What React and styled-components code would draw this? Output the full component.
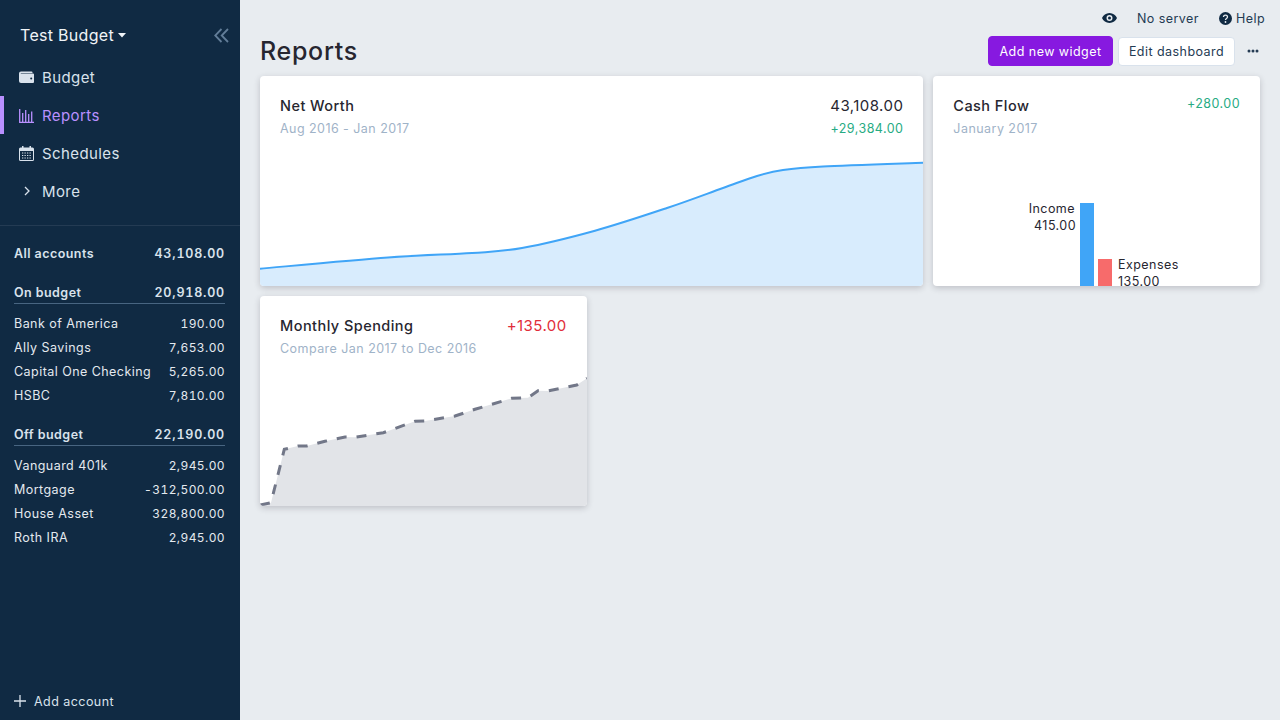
import React from 'react';
import styled, { createGlobalStyle } from 'styled-components';

const Global = createGlobalStyle`
  html, body { margin: 0; padding: 0; height: 100%; }
  body { font-family: Inter, "Noto Sans", sans-serif; font-size: 12.5px; letter-spacing: 0.45px; color: #272630; background: #e8ecf0; overflow: hidden; }
  #root { height: 720px; }
  * { box-sizing: border-box; }
`;

const Shell = styled.div`display: flex; width: 1280px; height: 720px;`;
const Sidebar = styled.aside`width: 240px; flex: none; background: #102a43; color: #d9e2ec; display: flex; flex-direction: column;`;
const BudgetHeader = styled.div`display: flex; align-items: center; height: 58px; padding: 12px 11px 0 20px;`;
const BudgetName = styled.div`font-size: 16px; color: #f0f4f8; letter-spacing: 0.3px; flex: 1; display: flex; align-items: center; gap: 4px;`;
const Nav = styled.nav`display: flex; flex-direction: column; padding-bottom: 15px; border-bottom: 1px solid #243b53;`;
const NavItem = styled.div`
  display: flex; align-items: center; gap: 8px; height: 38px; font-size: 15px; letter-spacing: 0.4px;
  padding-left: ${p => (p.$active ? 15 : 19)}px;
  color: ${p => (p.$active ? '#b990ff' : '#d9e2ec')};
  border-left: ${p => (p.$active ? '4px solid #b990ff' : 'none')};
`;
const NavIcon = styled.span`width: 15px; height: 15px; display: flex; align-items: center; justify-content: center;`;
const Accounts = styled.div`flex: 1; padding: 15px 15px 0 14px; display: flex; flex-direction: column;`;
const Row = styled.div`
  display: flex; justify-content: space-between; align-items: center; height: 24px;
  color: ${p => (p.$bold ? '#d9e2ec' : '#e4e9ef')};
  font-weight: ${p => (p.$bold ? 600 : 400)};
`;
const Amount = styled.span`
  font-variant-numeric: tabular-nums;
  font-size: ${p => (p.$bold ? 12.5 : 12)}px;
  letter-spacing: ${p => (p.$bold ? 0.8 : 0.4)}px;
`;
const GroupHead = styled(Row)`height: 23px; border-bottom: 1px solid #486581; margin-bottom: 7px; margin-top: ${p => p.$top}px;`;
const AddAccount = styled.div`height: 38px; display: flex; align-items: center; gap: 8px; padding-left: 14px; color: #d9e2ec;`;

const Main = styled.main`flex: 1; min-width: 0; display: flex; flex-direction: column; padding: 0 20px;`;
const TopBar = styled.div`height: 36px; display: flex; justify-content: flex-end; align-items: center; gap: 20px; color: #243b53; margin-right: -5px;`;
const TopItem = styled.div`display: flex; align-items: center; gap: 4px;`;
const TitleRow = styled.div`display: flex; align-items: center; justify-content: space-between; height: 30px; margin-bottom: 10px;`;
const Title = styled.h1`margin: 0; font-size: 25px; font-weight: 450; color: #272630; letter-spacing: 0.7px;`;
const Actions = styled.div`display: flex; align-items: center; gap: 5px;`;
const PrimaryButton = styled.button`height: 30px; width: 125px; padding: 0; font: inherit; letter-spacing: inherit; color: #fff; background: #8719e0; border: 1px solid #8719e0; border-radius: 4px;`;
const Button = styled.button`height: 29px; width: 117px; padding: 0; font: inherit; letter-spacing: inherit; color: #243b53; background: #fff; border: 1px solid #d9e2ec; border-radius: 4px;`;
const Dots = styled.div`width: 20px; height: 29px; padding-right: 1px; display: flex; align-items: center; justify-content: flex-end;`;

const Grid = styled.div`display: grid; grid-template-columns: repeat(3, 1fr); grid-auto-rows: 210px; gap: 10px;`;
const Card = styled.section`
  position: relative; grid-column: span ${p => p.$span || 1}; background: #fff; border-radius: 4px; overflow: hidden;
  box-shadow: 0 2px 6px rgba(39, 38, 48, 0.22); display: flex; flex-direction: column;
`;
const CardHeader = styled.div`position: relative; display: flex; justify-content: space-between; padding: 20px 20px 0;`;
const CardTitle = styled.div`font-size: 14.5px; font-weight: 450; line-height: 20px; letter-spacing: 0.45px; color: #272630;`;
const CardSub = styled.div`line-height: 16px; margin-top: 5px; color: #9fb3c8;`;
const Figures = styled.div`text-align: right;`;
const Big = styled.div`font-size: 15px; font-weight: 400; line-height: 20px; letter-spacing: 0.45px; color: ${p => p.$color || '#272630'};`;
const Small = styled.div`line-height: 16px; color: #27ab83; margin-top: ${p => p.$mt ?? 5}px;`;
const Chart = styled.svg`display: block; position: absolute; left: 0; top: 0;`;

const smooth = pts => {
  let d = `M${pts[0][0]} ${pts[0][1]}`;
  for (let i = 0; i < pts.length - 1; i++) {
    const p0 = pts[i - 1] || pts[i];
    const p1 = pts[i];
    const p2 = pts[i + 1];
    const p3 = pts[i + 2] || p2;
    d += ` C${p1[0] + (p2[0] - p0[0]) / 6} ${p1[1] + (p2[1] - p0[1]) / 6} ${p2[0] - (p3[0] - p1[0]) / 6} ${p2[1] - (p3[1] - p1[1]) / 6} ${p2[0]} ${p2[1]}`;
  }
  return d;
};
const netPts = smooth([[0,192.7],[128,181.5],[212,177],[262,172],[335,154.7],[407,132],[463,112],[497,100],[523,94],[563,90.500],[663,86.700]]);
const spend = [[0,209],[11,206.7],[24.3,153.3],[38,150],[46.7,150],[65,145.3],[85,141],[95,141.3],[123.3,136.7],[155,125.3],[165,125],[195,120],[215,113.3],[251.7,102.3],[268,101.7],[278,94.7],[288,95],[316.7,89],[327,82.3]];
const spendLine = spend.map(([x, y], i) => `${i ? 'L' : 'M'}${x} ${y}`).join(' ');

const accounts1 = [['Bank of America','190.00'],['Ally Savings','7,653.00'],['Capital One Checking','5,265.00'],['HSBC','7,810.00']];
const accounts2 = [['Vanguard 401k','2,945.00'],['Mortgage','-312,500.00'],['House Asset','328,800.00'],['Roth IRA','2,945.00']];

const Wallet = () => (
  <svg width="15" height="15" viewBox="0 0 15 15"><path d="M2 1.500h10.500a1 1 0 0 1 1 1v.5H2.200c-.6 0-.6.6 0 .6H14a1 1 0 0 1 1 1v7.400a1 1 0 0 1-1 1H2a2 2 0 0 1-2-2V3.500a2 2 0 0 1 2-2z" fill="#d9e2ec"/><circle cx="12.200" cy="8.600" r="1" fill="#102a43"/></svg>
);
const Bars = () => (
  <svg width="15" height="15" viewBox="0 0 15 15" fill="none" stroke="#b990ff" strokeWidth="1.300"><path d="M0.700 1v13.300H15M3.700 5v9M6.700 2v12M9.700 6v8M12.700 3.500v10.500"/></svg>
);
const Calendar = () => (
  <svg width="15" height="15" viewBox="0 0 15 15"><path fillRule="evenodd" fill="#d9e2ec" d="M3 0h1.500v1.500h6V0H12v1.500h1.500A1.500 1.500 0 0 1 15 3v10.500a1.500 1.500 0 0 1-1.500 1.500h-12A1.500 1.500 0 0 1 0 13.500V3a1.500 1.500 0 0 1 1.500-1.500H3zM1 5v8.500a.5.5 0 0 0 .5.5h12a.5.5 0 0 0 .5-.5V5z"/><path stroke="#d9e2ec" strokeWidth="1.200" strokeDasharray="1.300 1.200" d="M3 7h9.500M3 9.500h9.500M3 12h9.500"/></svg>
);
const Chevron = () => (
  <svg width="8" height="10" viewBox="0 0 8 10" fill="none" stroke="#d9e2ec" strokeWidth="1.300"><path d="M2 1l4 4-4 4"/></svg>
);
const Caret = () => (
  <svg width="8" height="5" viewBox="0 0 8 5"><path d="M0 0h8L4 4.600z" fill="#f0f4f8"/></svg>
);
const Collapse = () => (
  <svg width="15" height="15" viewBox="0 0 15 15" fill="none" stroke="#627d98" strokeWidth="1.800"><path d="M7.500 1L1.200 7.500 7.500 14M14 1L7.700 7.500 14 14"/></svg>
);
const Eye = () => (
  <svg width="15" height="10" viewBox="0 0 15 10"><path fillRule="evenodd" fill="#102a43" d="M7.500 0C11 0 13.800 2.200 15 5c-1.200 2.800-4 5-7.500 5S1.200 7.800 0 5C1.200 2.200 4 0 7.500 0zm0 2a3 3 0 1 0 0 6 3 3 0 0 0 0-6z"/><circle cx="7.500" cy="5" r="1.500" fill="#102a43"/></svg>
);
const Help = () => (
  <svg width="13" height="13" viewBox="0 0 13 13"><circle cx="6.500" cy="6.500" r="6.500" fill="#102a43"/><path d="M4.500 5c0-2.600 4-2.600 4 0 0 1.500-2 1.500-2 3" fill="none" stroke="#e8ecf0" strokeWidth="1.300"/><circle cx="6.500" cy="10" r=".9" fill="#e8ecf0"/></svg>
);
const More = () => (
  <svg width="12" height="4" viewBox="0 0 12 4" fill="#243b53"><circle cx="2" cy="2" r="1.500"/><circle cx="6" cy="2" r="1.500"/><circle cx="10" cy="2" r="1.500"/></svg>
);
const Plus = () => (
  <svg width="12" height="12" viewBox="0 0 12 12" stroke="#d9e2ec" strokeWidth="1.300"><path d="M6 0v12M0 6h12"/></svg>
);

export default function App() {
  return (
    <Shell>
      <Global />
      <Sidebar>
        <BudgetHeader>
          <BudgetName>Test Budget <Caret /></BudgetName>
          <Collapse />
        </BudgetHeader>
        <Nav>
          <NavItem><NavIcon><Wallet /></NavIcon>Budget</NavItem>
          <NavItem $active><NavIcon><Bars /></NavIcon>Reports</NavItem>
          <NavItem><NavIcon><Calendar /></NavIcon>Schedules</NavItem>
          <NavItem><NavIcon><Chevron /></NavIcon>More</NavItem>
        </Nav>
        <Accounts>
          <Row $bold><span>All accounts</span><Amount $bold>43,108.00</Amount></Row>
          <GroupHead $bold $top={16}><span>On budget</span><Amount $bold>20,918.00</Amount></GroupHead>
          {accounts1.map(([n, v]) => <Row key={n}><span>{n}</span><Amount>{v}</Amount></Row>)}
          <GroupHead $bold $top={16}><span>Off budget</span><Amount $bold>22,190.00</Amount></GroupHead>
          {accounts2.map(([n, v]) => <Row key={n}><span>{n}</span><Amount>{v}</Amount></Row>)}
        </Accounts>
        <AddAccount><Plus />Add account</AddAccount>
      </Sidebar>
      <Main>
        <TopBar>
          <Eye />
          <TopItem>No server</TopItem>
          <TopItem><Help />Help</TopItem>
        </TopBar>
        <TitleRow>
          <Title>Reports</Title>
          <Actions>
            <PrimaryButton>Add new widget</PrimaryButton>
            <Button>Edit dashboard</Button>
            <Dots><More /></Dots>
          </Actions>
        </TitleRow>
        <Grid>
          <Card $span={2}>
            <Chart width="664" height="210" viewBox="0 0 664 210">
              <path d={`${netPts} L664 86.700 L664 210 L0 210Z`} fill="#d8ecfd" />
              <path d={netPts} fill="none" stroke="#40a5f7" strokeWidth="2" />
            </Chart>
            <CardHeader>
              <div><CardTitle>Net Worth</CardTitle><CardSub>Aug 2016 - Jan 2017</CardSub></div>
              <Figures><Big>43,108.00</Big><Small>+29,384.00</Small></Figures>
            </CardHeader>
          </Card>
          <Card>
            <Chart width="327" height="210" viewBox="0 0 327 210" fontSize="12.5" fill="#272630" fontFamily="Inter">
              <rect x="147" y="127" width="14" height="83" fill="#40a5f7" />
              <rect x="165" y="183" width="14" height="27" fill="#f76b6b" />
              <text x="142" y="137" textAnchor="end">Income</text>
              <text x="143" y="154" textAnchor="end">415.00</text>
              <text x="185" y="193">Expenses</text>
              <text x="185" y="210">135.00</text>
            </Chart>
            <CardHeader>
              <div><CardTitle>Cash Flow</CardTitle><CardSub>January 2017</CardSub></div>
              <Figures><Small $mt={0}>+280.00</Small></Figures>
            </CardHeader>
          </Card>
          <Card>
            <Chart width="327" height="210" viewBox="0 0 327 210">
              <path d={`${spendLine} L327 210 L0 210Z`} fill="#e2e4e8" />
              <path d={spendLine} fill="none" stroke="#727788" strokeWidth="3" strokeDasharray="10 10" />
            </Chart>
            <CardHeader>
              <div><CardTitle>Monthly Spending</CardTitle><CardSub>Compare Jan 2017 to Dec 2016</CardSub></div>
              <Figures><Big $color="#e12d39">+135.00</Big></Figures>
            </CardHeader>
          </Card>
        </Grid>
      </Main>
    </Shell>
  );
}
